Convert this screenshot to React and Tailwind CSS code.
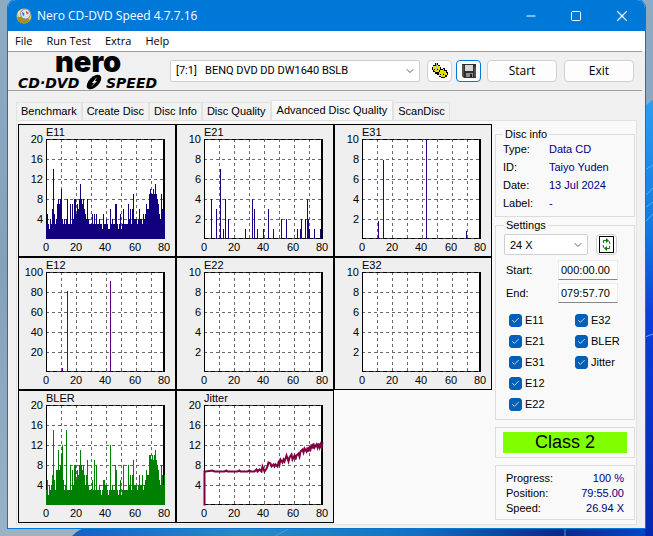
import { useState } from 'react';
import { Check, ChevronDown, Minus, Square, X } from 'lucide-react';

const E11 = [
    3, 5, 3, 2, 4, 3, 6, 14, 5, 3, 4, 7, 8, 7, 8, 10, 4, 3, 4, 3, 4, 8, 3, 3, 7, 3, 7, 4, 8, 8,
    5, 7, 6, 8, 11, 8, 7, 8, 6, 5, 4, 8, 4, 3, 3, 3, 5, 3, 5, 3, 5, 3, 3, 4, 3, 3, 2, 5, 3, 3,
    4, 3, 2, 2, 6, 3, 4, 3, 3, 7, 7, 3, 2, 3, 5, 2, 3, 6, 3, 3, 3, 3, 7, 4, 6, 3, 6, 9, 4, 4,
    4, 3, 4, 6, 4, 4, 3, 5, 4, 5, 7, 6, 6, 9, 10, 9, 9, 10, 9, 11, 9, 8, 7, 5, 4, 9, 6, 4, 6,
];

const BLER = [
    3, 5, 2, 4, 3, 4, 6, 15, 5, 3, 7, 7, 11, 7, 8, 10, 12, 5, 3, 4, 15, 3, 3, 3, 8, 3, 7, 4, 8, 8,
    5, 7, 6, 8, 11, 8, 7, 8, 6, 4, 6, 9, 4, 3, 3, 3, 5, 3, 9, 3, 8, 3, 3, 4, 3, 2, 3, 5, 5, 4,
    4, 3, 2, 3, 12, 3, 4, 3, 3, 8, 7, 3, 2, 3, 5, 2, 3, 8, 3, 3, 3, 3, 8, 4, 6, 3, 6, 9, 4, 4,
    4, 3, 4, 6, 4, 4, 6, 3, 4, 5, 7, 6, 6, 10, 10, 9, 10, 9, 10, 11, 9, 8, 7, 5, 4, 8, 6, 4, 6,
];

// [column, value] pairs for the sparse charts
const E21 = [
    [7, 4], [12, 3], [16, 7], [19, 1], [21, 4], [24, 2], [41, 1], [48, 4], [50, 3], [53, 1], [59, 1], [64, 3],
    [69, 1], [77, 2], [82, 2], [93, 1], [96, 1], [97, 2], [101, 2], [103, 4], [104, 2], [105, 1], [110, 1], [116, 1],
];
const E31 = [[16, 1.8], [21, 7.9], [64, 10], [104, 0.8]];
const E12 = [[16, 4], [21, 81], [64, 91], [104, 1]];

const JITTER =
    'M0 100V66H1L8 65L10 66H20L22 65L23 66H33L35 65L36 66H43L45 65L46 66H50L52 64L53 66L55 64L57 66L58 61L60 66L62 63L63 61L64 57L66 58L67 61L69 59L70 61L71 59L73 61L74 57L75 59L76 54L78 57L79 54L80 56L82 50L83 53L84 56L85 52L87 49L88 54L90 50L91 54L92 50L94 48L95 51L96 46L98 44L99 47L100 43L102 46L103 42L104 46L105 42L106 44L107 39L108 43L109 38L110 42L112 39L113 42L114 38L115 42L116 39L117 42L118 37';

const charts = [
    { title: 'E11', max: 20, data: E11.map((v, i) => [i, v]), color: '#100080' },
    { title: 'E21', max: 10, data: E21, color: '#200080' },
    { title: 'E31', max: 10, data: E31, color: '#300080' },
    { title: 'E12', max: 100, data: E12, color: '#580080' },
    { title: 'E22', max: 10, data: [], color: '#200080' },
    { title: 'E32', max: 10, data: [], color: '#200080' },
    { title: 'BLER', max: 20, data: BLER.map((v, i) => [i, v]), color: '#008000' },
    { title: 'Jitter', max: 20, line: JITTER, data: [], color: '#800040' },
];

const tabs = ['Benchmark', 'Create Disc', 'Disc Info', 'Disc Quality', 'Advanced Disc Quality', 'ScanDisc'];

const ui = "font-['Liberation_Sans',Arial,sans-serif]";
const segoe = "font-['Open_Sans','Noto_Sans',sans-serif]";
const buttonClass = 'flex h-[22px] items-center justify-center rounded border bg-[#fdfdfd]';

function Chart({ title, max, data, line, color }) {
    return (
        <svg viewBox="0 0 158 133" className="h-[133px] w-[158px] bg-[#efefef]" role="img" aria-label={title}>
            <rect x="0.5" y="0.5" width="157" height="132" fill="none" stroke="#000" />
            <rect x="28" y="15" width="119" height="100" fill="#fff" />
            <g stroke="#686868" strokeDasharray="3 3">
                {[1, 2, 3, 4, 5, 6, 7].map((i) => (
                    <path key={i} d={`M${28.5 + i * 15} 15V115`} />
                ))}
                {[1, 2, 3, 4].map((i) => (
                    <path key={i} d={`M28 ${15.5 + i * 20}H147`} />
                ))}
            </g>
            <path d="M28 15.5H147M28 114.5H147" stroke="#404040" />
            <path d="M28 15.5H147M28 114.5H147" stroke="#000" strokeDasharray="4 3" />
            <path d="M28.5 15V115" stroke="#000" />
            <path d="M146 15V115" stroke="#000" strokeWidth="2" />
            <path d={data.map(([x, v]) => `M${28.5 + x} 115V${115 - (v / max) * 100}`).join('')} stroke={color} />
            {line && <path d={line} transform="translate(28.5 15.5)" fill="none" stroke={color} strokeWidth="2" />}
            <g fontFamily="Liberation Sans, Arial, sans-serif" fontSize="11" fill="#000">
                <text x="28" y="12">{title}</text>
                {[0, 1, 2, 3, 4].map((i) => (
                    <text key={i} x="25" y={19 + i * 20} textAnchor="end">{max - (i * max) / 5}</text>
                ))}
                {[0, 20, 40, 60, 80].map((v) => (
                    <text key={v} x={28 + Math.round(v * 1.48)} y="127" textAnchor="middle">{v}</text>
                ))}
            </g>
        </svg>
    );
}

function Wallpaper() {
    return (
        <svg viewBox="0 0 653 536" preserveAspectRatio="none" className="absolute inset-0 h-full w-full" aria-hidden="true">
            <defs>
                <linearGradient id="sky" x1="0" y1="0" x2="0" y2="1">
                    <stop offset="0" stopColor="#8fabc2" />
                    <stop offset="0.5" stopColor="#86a0b8" />
                    <stop offset="1" stopColor="#9bb2c4" />
                </linearGradient>
                <linearGradient id="bloom" x1="0" y1="0" x2="0" y2="1">
                    <stop offset="0" stopColor="#2d9df0" />
                    <stop offset="0.3" stopColor="#1478e0" />
                    <stop offset="0.5" stopColor="#0a3fd8" />
                    <stop offset="1" stopColor="#0428b0" />
                </linearGradient>
                <linearGradient id="floor" x1="0" y1="0" x2="1" y2="0">
                    <stop offset="0" stopColor="#1560c8" />
                    <stop offset="0.3" stopColor="#2a8ac4" />
                    <stop offset="0.6" stopColor="#1470c0" />
                    <stop offset="0.85" stopColor="#052a88" />
                    <stop offset="1" stopColor="#0644c8" />
                </linearGradient>
            </defs>
            <rect width="653" height="536" fill="url(#sky)" />
            <path d="M640 112Q646 104 653 100V536H640Z" fill="url(#bloom)" />
            <path d="M645 170L653 165M645 196L653 188M645 208L653 202M645 222L653 214M645 337L653 334" stroke="#48b4f0" />
            <path d="M72 536Q78 530 88 526H645V536Z" fill="url(#floor)" />
            <path d="M275 536L292 527M565 526V536" stroke="#4c9fd0" />
        </svg>
    );
}

function Logo() {
    return (
        <svg viewBox="0 0 150 38" className="h-[38px] w-[150px] shrink-0 overflow-visible" role="img" aria-label="Nero CD-DVD Speed">
            <text x="41" y="20" fontFamily="Inter, sans-serif" fontWeight="900" fontSize="29">nero</text>
            <g fontFamily="DejaVu Sans, sans-serif" fontWeight="700" fontStyle="italic" fontSize="14">
                <text x="4" y="36">CD·DVD</text>
                <text x="92" y="36">SPEED</text>
            </g>
            <ellipse cx="80" cy="30" rx="9" ry="5" transform="rotate(-45 80 30)" />
            <path d="M77 35L80 31L78 31L83 25L81 29L83 29Z" fill="#f0f0f0" />
        </svg>
    );
}

function Dropdown({ label, value, className }) {
    return (
        <div className={`grid items-center ${className}`}>
            <select aria-label={label} className="col-start-1 row-start-1 h-full w-full appearance-none rounded-xs border border-[#cfcfcf] bg-white pr-5 pl-[5px] leading-4">
                <option>{value}</option>
            </select>
            <ChevronDown className="pointer-events-none col-start-1 row-start-1 mr-1 justify-self-end text-[#606060]" size={12} strokeWidth={2} />
        </div>
    );
}

function Group({ title, className, children }) {
    return (
        <fieldset className={`border border-[#dcdcdc] ${className}`}>
            {title && <legend className="px-[2px] leading-3">{title}</legend>}
            {children}
        </fieldset>
    );
}

function TimeField({ label, value }) {
    return (
        <label className="flex h-5 items-center justify-between">
            {label}
            <input defaultValue={value} className="h-5 w-[60px] border border-b-[#868686] border-[#ececec] bg-white pl-[2px]" />
        </label>
    );
}

function Tick({ label }) {
    const [on, setOn] = useState(true);
    return (
        <label className="flex h-[21px] items-center gap-[3px]">
            <span className="grid place-items-center">
                <input type="checkbox" checked={on} onChange={() => setOn(!on)} className="col-start-1 row-start-1 size-[13px] appearance-none rounded-[3px] border border-[#005fb8] checked:bg-[#005fb8]" />
                {on && <Check className="pointer-events-none col-start-1 row-start-1 text-white" size={9} strokeWidth={2} />}
            </span>
            {label}
        </label>
    );
}

function Row({ label, value }) {
    return (
        <div className="flex h-[18px] items-center">
            <dt className="w-[46px]">{label}</dt>
            <dd className="text-[#000080]">{value}</dd>
        </div>
    );
}

export default function App() {
    const [tab, setTab] = useState('Advanced Disc Quality');

    return (
        <div className="relative min-h-screen bg-[#8fabc2] px-2 pb-2">
            <Wallpaper />
            <div className={`relative rounded-t-lg bg-[#f0f0f0] text-[11px] text-black shadow-[0_0_0_1px_#0078d7] ${ui}`}>
                <header className={`flex h-[31px] items-center rounded-t-lg bg-[#0078d7] pl-2 text-[12px] text-white ${segoe}`}>
                    <svg viewBox="0 0 16 16" className="mr-[5px] size-4" aria-hidden="true">
                        <circle cx="8" cy="8" r="7.5" fill="#d8c85c" />
                        <path d="M1 9A7 7 0 0 0 14 12L9 8Z" fill="#a88f20" />
                        <path d="M2 4L7 1L8 7L3 9Z" fill="#f2eaa0" />
                        <circle cx="9.5" cy="6" r="5" fill="#d9e4f2" stroke="#8090a8" />
                        <path d="M6 4L10 6L7 8Z" fill="#3c66c8" />
                        <path d="M10 3L13 5L10 7Z" fill="#d84838" />
                        <circle cx="9.5" cy="6" r="1.2" fill="#fff" />
                    </svg>
                    <h1 className="flex-1">Nero CD-DVD Speed 4.7.7.16</h1>
                    <button type="button" aria-label="Minimize" className="grid h-full w-[45px] place-items-center"><Minus size={14} strokeWidth={2} /></button>
                    <button type="button" aria-label="Maximize" className="grid h-full w-[45px] place-items-center"><Square size={12} strokeWidth={2} /></button>
                    <button type="button" aria-label="Close" className="grid h-full w-[47px] place-items-center"><X size={18} strokeWidth={1.5} /></button>
                </header>

                <nav className={`flex h-5 items-center gap-[14px] bg-white pl-[7px] leading-3 ${segoe}`}>
                    {['File', 'Run Test', 'Extra', 'Help'].map((item) => (
                        <button key={item} type="button">{item}</button>
                    ))}
                </nav>

                <div className="mr-[3px] flex h-10 items-center border-y border-[#a0a0a0] pr-2 pl-[6px]">
                    <Logo />
                    <Dropdown label="Drive" value={'[7:1]\u00a0\u00a0\u00a0BENQ DVD DD DW1640 BSLB'} className="ml-[6px] h-[22px] flex-1 font-['Roboto',sans-serif]" />
                    <button type="button" aria-label="Options" className={`ml-[7px] w-[25px] border-[#d0d0d0] ${buttonClass}`}>
                        <svg viewBox="0 0 18 18" className="size-[18px]" aria-hidden="true">
                            <path d="M1 5H2V3H4V1H7V3H9V5H10V7H12V6H14V8H16V10H17V13H16V15H14V16H10V15H8V13H6V12H4V10H2V8H1Z" fill="#000" />
                            <path d="M2 4H5V3H7V4H9V8H8V10H4V9H3V8H2ZM9 8H12V7H13V9H15V11H16V13H14V15H10V14H8V10H9Z" fill="#e8dc00" />
                            <path d="M5.5 1V7M12.5 7V12" stroke="#b8b8b8" />
                            <path d="M3 7.500H8M9 12.500H15" stroke="#000" strokeDasharray="1 2" />
                        </svg>
                    </button>
                    <button type="button" aria-label="Save" className={`ml-1 w-[25px] border-[#0078d7] ${buttonClass}`}>
                        <svg viewBox="0 0 14 14" className="size-[14px]" aria-hidden="true">
                            <path d="M0 0H14V14H2L0 12Z" fill="#303030" />
                            <path d="M3 1H11V7H3Z" fill="#d8d8d8" />
                            <path d="M4 9H11V13H4Z" fill="#909090" />
                            <path d="M8 10H10V13H8Z" fill="#202020" />
                            <path d="M1 1V12M13 3V13" stroke="#707070" />
                        </svg>
                    </button>
                    <button type="button" className={`ml-[6px] w-[70px] border-[#d0d0d0] text-[12px] ${segoe} ${buttonClass}`}>Start</button>
                    <button type="button" className={`ml-[7px] w-[70px] border-[#d0d0d0] text-[12px] ${segoe} ${buttonClass}`}>Exit</button>
                </div>

                <div className="px-2 pt-[9px] pb-[3px]">
                    <div role="tablist" className="flex items-end">
                        {tabs.map((name) => (
                            <button
                                key={name}
                                type="button"
                                role="tab"
                                aria-selected={name === tab}
                                onClick={() => setTab(name)}
                                className={`border border-b-0 border-[#e2e2e2] whitespace-nowrap ${name === tab ? 'h-5 bg-[#f9f9f9] px-[5px]' : 'h-[18px] bg-[#f2f2f2] px-1'}`}
                            >
                                {name}
                            </button>
                        ))}
                    </div>

                    <main className="flex gap-[3px] border border-[#e2e2e2] bg-[#f9f9f9] pt-[3px] pr-px pb-px pl-px">
                        <div className="grid shrink-0 grid-cols-[repeat(3,158px)] self-start">
                            {charts.map((c) => (
                                <Chart key={c.title} {...c} />
                            ))}
                        </div>

                        <aside className="min-w-0 flex-1 pt-1">
                            <Group title="Disc info" className="pb-1 pl-[7px]">
                                <dl>
                                    <Row label="Type:" value="Data CD" />
                                    <Row label="ID:" value="Taiyo Yuden" />
                                    <Row label="Date:" value="13 Jul 2024" />
                                    <Row label="Label:" value="-" />
                                </dl>
                            </Group>

                            <Group title="Settings" className="mt-[2px] px-2 pb-1">
                                <div className="flex items-center gap-2 pt-[3px]">
                                    <Dropdown label="Speed" value="24 X" className="h-[21px] w-[84px]" />
                                    <button type="button" aria-label="Refresh" className="grid size-[21px] place-items-center rounded border border-[#d0d0d0] bg-[#fdfdfd]">
                                        <svg viewBox="0 0 15 17" className="h-[17px] w-[15px]" aria-hidden="true">
                                            <rect x="0.5" y="0.5" width="14" height="16" fill="#fff" stroke="#000" />
                                            <path d="M4.5 7V4.5H8M10.5 10V12.5H7" fill="none" stroke="#008000" />
                                            <path d="M7 2L10 4.5L7 7ZM8 10L5 12.5L8 15Z" fill="#008000" />
                                            <path d="M10 5L11 8M5 12L4 9" stroke="#008000" />
                                        </svg>
                                    </button>
                                </div>
                                <div className="mt-[5px] mr-2 ml-[2px] flex flex-col gap-[3px]">
                                    <TimeField label="Start:" value="000:00.00" />
                                    <TimeField label="End:" value="079:57.70" />
                                </div>
                                <div className="mt-[7px] ml-[5px] grid grid-cols-[66px_1fr]">
                                    <div>
                                        {['E11', 'E21', 'E31', 'E12', 'E22'].map((name) => <Tick key={name} label={name} />)}
                                    </div>
                                    <div>
                                        {['E32', 'BLER', 'Jitter'].map((name) => <Tick key={name} label={name} />)}
                                    </div>
                                </div>
                            </Group>

                            <Group className="mt-[7px] px-[7px] py-1">
                                <div className="bg-[#80ff00] text-center text-[18px] leading-[21px]">Class 2</div>
                            </Group>

                            <Group className="mt-[7px] px-[10px] pt-[5px] pb-[3px]">
                                <dl className="grid grid-cols-2 leading-[15px]">
                                    <dt>Progress:</dt>
                                    <dd className="text-right text-[#000080]">100 %</dd>
                                    <dt>Position:</dt>
                                    <dd className="text-right text-[#000080]">79:55.00</dd>
                                    <dt>Speed:</dt>
                                    <dd className="text-right text-[#000080]">26.94 X</dd>
                                </dl>
                            </Group>
                        </aside>
                    </main>
                </div>
            </div>
        </div>
    );
}
